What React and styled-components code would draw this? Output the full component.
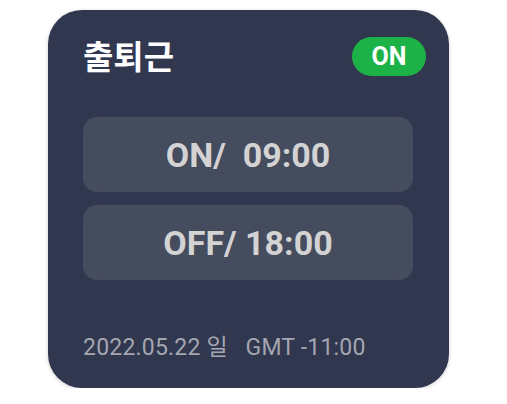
import React from "react";
import styled, { createGlobalStyle } from "styled-components";

const Global = createGlobalStyle`
  html, body { margin: 0; padding: 0; background: #ffffff; }
  body { font-family: Roboto, "Noto Sans CJK KR", sans-serif; }
`;

const Page = styled.div`
  padding: 10px 0 0 48px;
`;

const Card = styled.div`
  box-sizing: border-box;
  width: 401px;
  height: 378px;
  border-radius: 34px;
  background: #30374f;
  box-shadow: 0 1px 4px rgba(0, 0, 0, 0.18);
  padding: 25px 36px 28px 35px;
  display: flex;
  flex-direction: column;
`;

const Header = styled.div`
  display: flex;
  justify-content: space-between;
  align-items: center;
  height: 40px;
  margin-right: -13px;
`;

const Title = styled.div`
  font-family: "Noto Sans CJK KR", sans-serif;
  font-weight: 700;
  font-size: 33px;
  line-height: 40px;
  color: #ffffff;
`;

const Toggle = styled.div`
  width: 74px;
  height: 39px;
  margin-top: 2px;
  border-radius: 20px;
  background: ${(p) => (p.$on ? "#1db247" : "#6b7080")};
  color: #ffffff;
  font-family: Roboto, sans-serif;
  font-weight: 700;
  font-size: 25px;
  display: flex;
  align-items: center;
  justify-content: center;
`;

const List = styled.div`
  display: flex;
  flex-direction: column;
  gap: 13px;
  margin-top: 42px;
`;

const TimeButton = styled.div`
  height: 75px;
  border-radius: 14px;
  background: #454c5e;
  color: #d3d3d3;
  font-family: Roboto, sans-serif;
  font-weight: 700;
  font-size: 34px;
  display: flex;
  align-items: center;
  justify-content: center;
  white-space: pre;
`;

const Footer = styled.div`
  margin-top: auto;
  line-height: 24px;
  font-family: Roboto, "Noto Sans CJK KR", sans-serif;
  font-size: 23px;
  color: #a3a6b0;
  white-space: pre;
  letter-spacing: 0.2px;
`;

export default function App() {
  return (
    <>
      <Global />
      <Page>
        <Card>
          <Header>
            <Title>출퇴근</Title>
            <Toggle $on>ON</Toggle>
          </Header>
          <List>
            <TimeButton>{"ON/  09:00"}</TimeButton>
            <TimeButton>{"OFF/ 18:00"}</TimeButton>
          </List>
          <Footer>{"2022.05.22 일   GMT -11:00"}</Footer>
        </Card>
      </Page>
    </>
  );
}
